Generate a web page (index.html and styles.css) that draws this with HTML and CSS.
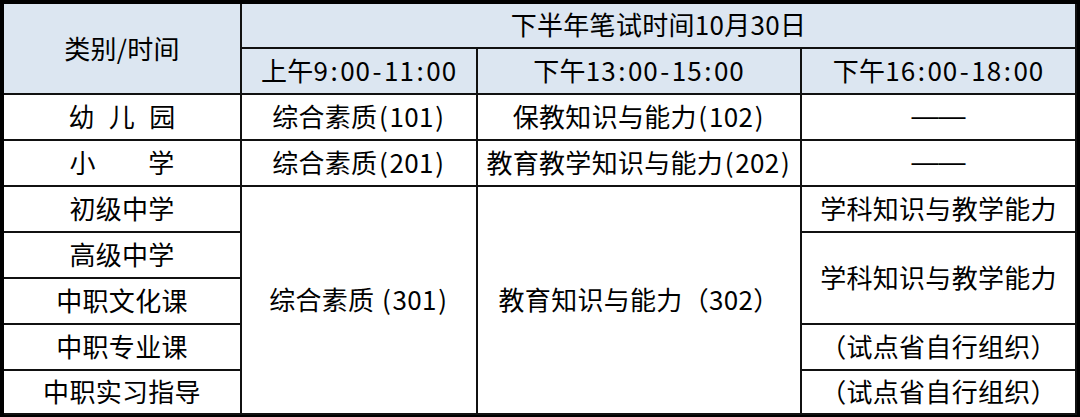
FILE: index.html
```html
<!DOCTYPE html>
<html lang="zh-CN">
<head>
<meta charset="utf-8">
<title>下半年笔试时间</title>
<link rel="stylesheet" href="styles.css">
</head>
<body>
<div class="frame">
  <div class="sheet">
    <div class="cell head corner"><span>类别/时间</span></div>
    <div class="cell head span3 title"><span>下半年笔试时间10月30日</span></div>
    <div class="cell head"><span>上午<span class="t">9<span class="sep">:</span>00<span class="sep">-</span>11<span class="sep">:</span>00</span></span></div>
    <div class="cell head"><span>下午<span class="t">13<span class="sep">:</span>00<span class="sep">-</span>15<span class="sep">:</span>00</span></span></div>
    <div class="cell head"><span>下午<span class="t">16<span class="sep">:</span>00<span class="sep">-</span>18<span class="sep">:</span>00</span></span></div>

    <div class="cell"><span class="spaced">幼 儿 园</span></div>
    <div class="cell"><span>综合素质<span class="par">(</span>101<span class="par">)</span></span></div>
    <div class="cell"><span>保教知识与能力<span class="par">(</span>102<span class="par">)</span></span></div>
    <div class="cell"><span class="dash">——</span></div>

    <div class="cell"><span>小　　学</span></div>
    <div class="cell"><span>综合素质<span class="par">(</span>201<span class="par">)</span></span></div>
    <div class="cell"><span>教育教学知识与能力<span class="par">(</span>202<span class="par">)</span></span></div>
    <div class="cell"><span class="dash">——</span></div>

    <div class="cell"><span>初级中学</span></div>
    <div class="cell span5"><span>综合素质 <span class="par">(</span>301<span class="par">)</span></span></div>
    <div class="cell span5"><span>教育知识与能力（302）</span></div>
    <div class="cell"><span>学科知识与教学能力</span></div>

    <div class="cell"><span>高级中学</span></div>
    <div class="cell span2"><span>学科知识与教学能力</span></div>

    <div class="cell"><span>中职文化课</span></div>

    <div class="cell"><span>中职专业课</span></div>
    <div class="cell"><span>（试点省自行组织）</span></div>

    <div class="cell"><span>中职实习指导</span></div>
    <div class="cell"><span>（试点省自行组织）</span></div>
  </div>
</div>
</body>
</html>
```
FILE: styles.css
```css
html, body {
  margin: 0;
  padding: 0;
  background: #000;
}

.frame {
  width: 1080px;
  height: 417px;
  box-sizing: border-box;
  padding: 4px 0 0 4px;
  background: #000;
  overflow: hidden;
}

.sheet {
  display: grid;
  grid-template-columns: 238px 236px 324px 275px;
  grid-template-rows: 45px 46px 46px 46px 46px 46px 46px 46px 44px;
  background: #fff;
  width: 1073px;
  font-family: "Noto Sans CJK SC", "Noto Sans", sans-serif;
  font-size: 26px;
  letter-spacing: 0.3px;
  color: #000;
}

.cell {
  box-sizing: border-box;
  border-right: 2px solid #111;
  border-bottom: 2px solid #111;
  display: flex;
  align-items: center;
  justify-content: center;
  white-space: nowrap;
  line-height: 1;
  padding-bottom: 2px;
  background: #fff;
}

.head {
  background: #dce6f1;
}

.title {
  padding-bottom: 4px;
}

.corner {
  grid-row: span 2;
}

.span3 {
  grid-column: span 3;
}

.span5 {
  grid-row: span 5;
}

.span2 {
  grid-row: span 2;
}

.spaced {
  word-spacing: 8px;
}

.t {
  letter-spacing: 1px;
}

.sep {
  padding: 0 1.5px;
}

.par {
  padding: 0 1.5px;
}

.dash {
  display: inline-block;
  font-family: "Liberation Sans", sans-serif;
  font-size: 27px;
  letter-spacing: 0;
}
```
